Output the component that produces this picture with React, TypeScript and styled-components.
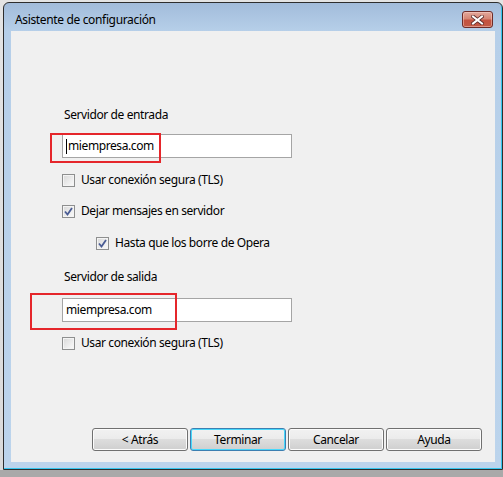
import React from "react";
import styled, { createGlobalStyle } from "styled-components";

const Global = createGlobalStyle`
  html, body { margin: 0; padding: 0; }
  body {
    width: 503px;
    height: 477px;
    overflow: hidden;
    background: linear-gradient(#e4e4e4 0, #dadada 470px, #a9a9a9 470px);
    font-family: "Segoe UI", "Noto Sans", sans-serif;
    font-size: 12px;
    letter-spacing: -0.4px;
    color: #000;
  }
`;

const Stage = styled.div`
  padding: 2px 0 0 3px;
`;

const Window = styled.div`
  width: 500px;
  height: 468px;
  box-sizing: border-box;
  border: 1px solid #2e2e2e;
  border-radius: 6px 6px 0 0;
  background: linear-gradient(#a2bcdb 0, #b6cfe9 28px, #bcd4ec 100%);
  box-shadow: inset -1px -1px 0 #36c6ee;
  padding: 0 7px 7px 7px;
  display: flex;
  flex-direction: column;
`;

const TitleBar = styled.div`
  height: 28px;
  display: flex;
  align-items: flex-start;
  justify-content: space-between;
`;

const Title = styled.div`
  padding: 9px 0 0 4px;
  line-height: 16px;
  color: #000;
  letter-spacing: -0.35px;
`;

const CloseButton = styled.div`
  margin: 8px 2px 0 0;
  width: 31px;
  height: 17px;
  box-sizing: border-box;
  border: 1px solid #6e2c28;
  border-radius: 3px;
  background: linear-gradient(#e2a89c 0, #d68674 45%, #c4523f 55%, #c25a45 100%);
  box-shadow: inset 0 0 0 1px rgba(255, 220, 210, 0.45);
  display: flex;
  align-items: center;
  justify-content: center;
`;

const Client = styled.div`
  position: relative;
  flex: 1;
  background: #f0f0f0;
  display: flex;
  flex-direction: column;
`;

const Form = styled.div`
  padding: 76px 0 0 51px;
  display: flex;
  flex-direction: column;
  align-items: flex-start;
`;

const Label = styled.div<{ $top?: number }>`
  margin-top: ${(p) => p.$top ?? 0}px;
  padding-left: 2px;
  line-height: 16px;
  height: 16px;
`;

const TextInput = styled.div<{ $top: number; $textLeft: number }>`
  margin-top: ${(p) => p.$top}px;
  width: 230px;
  height: 24px;
  box-sizing: border-box;
  border: 1px solid #a5a5a5;
  background: #fff;
  display: flex;
  align-items: center;
  padding-left: ${(p) => p.$textLeft}px;
  line-height: 16px;
`;

const Caret = styled.span`
  display: inline-block;
  width: 1px;
  height: 15px;
  background: #000;
  margin-right: 1px;
`;

const CheckRow = styled.div<{ $top: number; $indent?: number }>`
  margin-top: ${(p) => p.$top}px;
  margin-left: ${(p) => p.$indent ?? 0}px;
  height: 16px;
  display: flex;
  align-items: center;
  gap: 6px;
  line-height: 16px;
`;

const Box = styled.span`
  width: 13px;
  height: 13px;
  box-sizing: border-box;
  border: 1px solid #8e8f8f;
  background: linear-gradient(135deg, #d8d8d8 0, #f1f1f1 70%, #fafafa 100%);
  box-shadow: inset 0 0 0 1px #f4f4f4;
  display: flex;
  align-items: center;
  justify-content: center;
`;

const Highlight = styled.div<{ $l: number; $t: number; $w: number; $h: number }>`
  position: absolute;
  left: ${(p) => p.$l}px;
  top: ${(p) => p.$t}px;
  width: ${(p) => p.$w}px;
  height: ${(p) => p.$h}px;
  box-sizing: border-box;
  border: 2px solid #e5262b;
  pointer-events: none;
`;

const ButtonRow = styled.div`
  margin-top: auto;
  padding: 0 13px 11px 0;
  display: flex;
  justify-content: flex-end;
  gap: 2px;
`;

const Button = styled.div<{ $default?: boolean }>`
  width: 96px;
  height: 23px;
  box-sizing: border-box;
  border: 1px solid ${(p) => (p.$default ? "#3c7fb1" : "#707070")};
  border-radius: 3px;
  background: linear-gradient(#f2f2f2 0, #ebebeb 50%, #dddddd 50%, #cfcfcf 100%);
  box-shadow: ${(p) =>
    p.$default ? "inset 0 0 0 1px #48d8fb" : "inset 0 0 0 1px #fcfcfc"};
  display: flex;
  align-items: center;
  justify-content: center;
  line-height: 16px;
  color: #000;
`;

const Check = () => (
  <svg width="9" height="9" viewBox="0 0 9 9">
    <path d="M1 4.5 L3.5 7.5 L8 1" fill="none" stroke="#4a5c94" strokeWidth="1.8" />
  </svg>
);

const CheckBox = ({ checked }: { checked?: boolean }) => <Box>{checked && <Check />}</Box>;

const CloseGlyph = () => (
  <svg width="13" height="10" viewBox="0 0 13 10">
    <path d="M2 1.5 L11 8.5 M11 1.5 L2 8.5" stroke="#5a2a28" strokeWidth="3.6" strokeLinecap="square" />
    <path d="M2 1.5 L11 8.5 M11 1.5 L2 8.5" stroke="#ffffff" strokeWidth="2" strokeLinecap="square" />
  </svg>
);

export default function App() {
  return (
    <>
      <Global />
      <Stage>
        <Window>
          <TitleBar>
            <Title>Asistente de configuración</Title>
            <CloseButton>
              <CloseGlyph />
            </CloseButton>
          </TitleBar>
          <Client>
            <Form>
              <Label>Servidor de entrada</Label>
              <TextInput $top={11} $textLeft={3}>
                <Caret />
                miempresa.com
              </TextInput>
              <CheckRow $top={14}>
                <CheckBox />
                Usar conexión segura (TLS)
              </CheckRow>
              <CheckRow $top={15}>
                <CheckBox checked />
                Dejar mensajes en servidor
              </CheckRow>
              <CheckRow $top={16} $indent={34}>
                <CheckBox checked />
                Hasta que los borre de Opera
              </CheckRow>
              <Label $top={18}>Servidor de salida</Label>
              <TextInput $top={13} $textLeft={3}>
                miempresa.com
              </TextInput>
              <CheckRow $top={13}>
                <CheckBox />
                Usar conexión segura (TLS)
              </CheckRow>
            </Form>
            <ButtonRow>
              <Button>&lt; Atrás</Button>
              <Button $default>Terminar</Button>
              <Button>Cancelar</Button>
              <Button>Ayuda</Button>
            </ButtonRow>
            <Highlight $l={39} $t={102} $w={111} $h={30} />
            <Highlight $l={19} $t={262} $w={147} $h={37} />
          </Client>
        </Window>
      </Stage>
    </>
  );
}
